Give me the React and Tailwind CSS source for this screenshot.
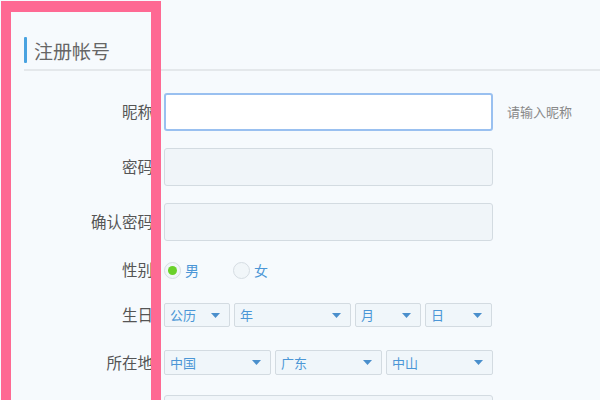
const font = { fontFamily: '"Noto Sans CJK SC", "Noto Sans", sans-serif' };

const Caret = () => (
  <svg width="9" height="5" viewBox="0 0 9 5" className="shrink-0">
    <path d="M0 0h9L4.5 5z" fill="#4a8fcc" />
  </svg>
);

const Select = ({ label, width }) => (
  <div
    className={`flex h-full items-center justify-between rounded-[2px] border border-[#d3dbe1] bg-[#f0f6fa] pl-[5px] pr-[9px] text-[13px] text-[#4b96d6] ${width}`}
  >
    <span>{label}</span>
    <Caret />
  </div>
);

const Row = ({ label, className, children }) => (
  <div className={`flex items-center ${className}`}>
    <div className="w-[129px] text-right text-[15.5px] text-[#555]">{label}</div>
    <div className="ml-[11px] flex h-full items-center">{children}</div>
  </div>
);

const Radio = ({ checked, label }) => (
  <div className="flex items-center gap-[4px]">
    <div className="flex h-[17px] w-[17px] items-center justify-center rounded-full border border-[#d6dde3] bg-[#f1f6f9]">
      {checked ? <div className="h-[9px] w-[9px] rounded-full bg-[#6ad12a]" /> : null}
    </div>
    <span className="text-[14px] text-[#4b96d6]">{label}</span>
  </div>
);

const App = () => {
  return (
    <div className="relative h-[400px] w-[600px] overflow-hidden bg-[#f6fafd]" style={font}>
      <div className="pl-[24px] pt-[37px]">
        <div className="flex h-[26px] items-center">
          <div className="h-[26px] w-[3px] rounded-[1px] bg-[#4aa3e0]" />
          <span className="ml-[7px] text-[19px] leading-none text-[#666]">注册帐号</span>
        </div>
        <div className="mt-[6px] h-[2px] bg-[#e4e8eb]" />

        <Row label="昵称" className="mt-[22px] h-[38px]">
          <div className="h-[38px] w-[329px] rounded-[3px] border-2 border-[#99c0f0] bg-white" />
          <span className="ml-[14px] text-[13px] text-[#888]">请输入昵称</span>
        </Row>
        <Row label="密码" className="mt-[17px] h-[38px]">
          <div className="h-[38px] w-[329px] rounded-[3px] border border-[#d3dbe1] bg-[#f0f5f9]" />
        </Row>
        <Row label="确认密码" className="mt-[17px] h-[38px]">
          <div className="h-[38px] w-[329px] rounded-[3px] border border-[#d3dbe1] bg-[#f0f5f9]" />
        </Row>
        <Row label="性别" className="mt-[14px] h-[30px]">
          <div className="flex items-center gap-[34px]">
            <Radio checked label="男" />
            <Radio label="女" />
          </div>
        </Row>
        <Row label="生日" className="mt-[18px] h-[24px]">
          <div className="flex h-full gap-[4px]">
            <Select label="公历" width="w-[66px]" />
            <Select label="年" width="w-[117px]" />
            <Select label="月" width="w-[66px]" />
            <Select label="日" width="w-[67px]" />
          </div>
        </Row>
        <Row label="所在地" className="mt-[23px] h-[25px]">
          <div className="flex h-full gap-[4px]">
            <Select label="中国" width="w-[107px]" />
            <Select label="广东" width="w-[107px]" />
            <Select label="中山" width="w-[107px]" />
          </div>
        </Row>
        <Row label="" className="mt-[20px] h-[38px]">
          <div className="h-[38px] w-[329px] rounded-[3px] border border-[#d3dbe1] bg-[#f0f5f9]" />
        </Row>
      </div>

      {/* pink annotation frame */}
      <div className="absolute left-[1px] top-[1px] h-[420px] w-[160px] border-x-[10px] border-t-[11px] border-[#fe6993]" />
    </div>
  );
};

export default App;
